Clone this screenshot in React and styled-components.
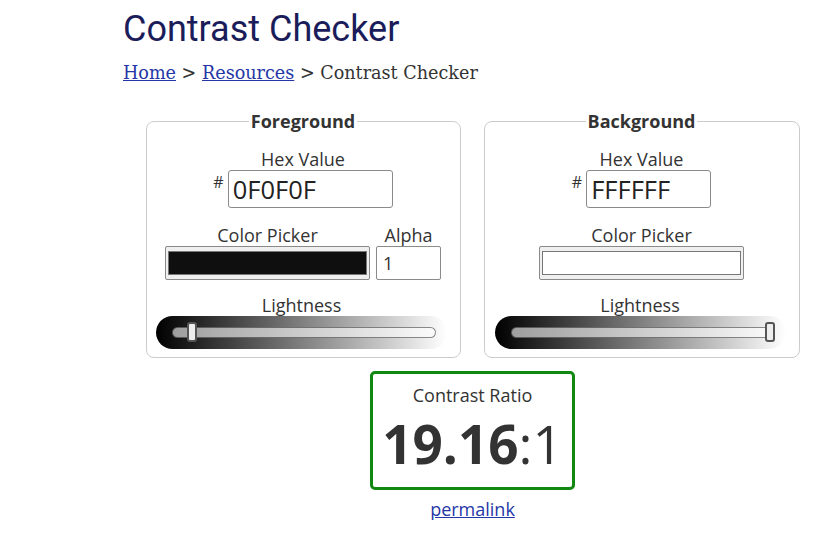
import React from 'react'
import styled, { createGlobalStyle } from 'styled-components'

const GlobalStyle = createGlobalStyle`
    body {
        margin: 0;
        background: #fff;
        font-family: "Open Sans", "Liberation Sans", sans-serif;
        color: #333;
    }
`

const Page = styled.main`
    width: 699px;
    padding: 8px 0 0 123px;
`

const Title = styled.h1`
    font-family: Roboto, "Liberation Sans", sans-serif;
    font-weight: 400;
    font-size: 36px;
    line-height: 42px;
    color: #1b1c5a;
    margin: 0;
`

const Crumbs = styled.nav`
    font-family: "DejaVu Serif", "Liberation Serif", serif;
    font-size: 17.6px;
    line-height: 24px;
    color: #333;
    margin-top: 11px;

    a {
        color: #2536a6;
    }
`

const Panels = styled.div`
    display: grid;
    grid-template-columns: 315px 316px;
    justify-content: center;
    column-gap: 23px;
    margin-top: 24px;
`

const Panel = styled.fieldset`
    margin: 0;
    padding: 0 0 8px;
    border: 1px solid #ccc;
    border-radius: 8px;
    display: flex;
    flex-direction: column;
    align-items: center;
`

const Legend = styled.legend`
    margin: 0 auto;
    padding: 0 2px;
    font-weight: 700;
    font-size: 18px;
    line-height: 25px;
`

const Label = styled.div`
    font-size: 18px;
    line-height: 22px;
    text-align: center;
    margin-top: ${p => p.$top || 0}px;
`

const HexRow = styled.div`
    display: flex;
    align-items: flex-start;
`

const Hash = styled.span`
    font-size: 16px;
    line-height: 18px;
    margin: 3px 4px 0 0;
`

const HexInput = styled.div`
    box-sizing: border-box;
    width: ${p => p.$width}px;
    height: 38px;
    border: 1px solid #8a8a8a;
    border-radius: 3px;
    padding: 0 4px;
    font-size: 25.5px;
    line-height: 36px;
    color: #222;
`

const PickerRow = styled.div`
    display: flex;
    gap: 6px;
    margin-top: 16px;
`

const Column = styled.div`
    display: flex;
    flex-direction: column;
    align-items: center;
`

const Picker = styled.div`
    box-sizing: border-box;
    width: 205px;
    height: 34px;
    padding: 4px 2px;
    background: #efefef;
    border: 1px solid #8a8a8a;
    border-radius: 2px;
`

const Swatch = styled.div`
    height: 100%;
    box-sizing: border-box;
    border: 1px solid #777;
    background: ${p => p.$color};
`

const AlphaInput = styled.div`
    box-sizing: border-box;
    width: 65px;
    height: 34px;
    border: 1px solid #8a8a8a;
    border-radius: 2px;
    padding: 0 6px;
    font-size: 18px;
    line-height: 32px;
`

const SliderBlock = styled.div`
    display: flex;
    flex-direction: column;
    align-items: center;
    margin-top: 14px;
    margin-right: 3px;
`

const SliderPill = styled.div`
    box-sizing: border-box;
    width: 291px;
    height: 33px;
    border-radius: 17px;
    background: linear-gradient(to right, #000 0%, #fff 100%);
    padding: 11px 11px 0 16px;
`

const Track = styled.div`
    position: relative;
    box-sizing: border-box;
    height: 11px;
    border: 1px solid rgba(0, 0, 0, 0.45);
    border-radius: 6px;
    background: rgba(255, 255, 255, 0.6);
`

const Thumb = styled.div`
    position: absolute;
    top: -6px;
    box-sizing: border-box;
    width: 10px;
    height: 20px;
    background: #eee;
    border: 2px solid #555;
    border-radius: 3px;
`

const Result = styled.div`
    display: flex;
    flex-direction: column;
    align-items: center;
    margin-top: 13px;
`

const RatioBox = styled.div`
    box-sizing: border-box;
    width: 205px;
    height: 119px;
    border: 3px solid #118811;
    border-radius: 5px;
    display: flex;
    flex-direction: column;
    align-items: center;
    padding-top: 10px;
`

const Ratio = styled.div`
    font-size: 53px;
    line-height: 60px;
    margin-top: 8px;

    b {
        font-weight: 700;
    }
`

const Permalink = styled.a`
    font-size: 18px;
    line-height: 24px;
    margin-top: 7px;
    color: #2536a6;
`

const TRACK_WIDTH = 264
const THUMB_WIDTH = 10

const Lightness = ({ value }) => (
    <SliderBlock>
        <Label>Lightness</Label>
        <SliderPill>
            <Track>
                <Thumb style={{ left: Math.round(value * (TRACK_WIDTH - THUMB_WIDTH)) - 1 }} />
            </Track>
        </SliderPill>
    </SliderBlock>
)

const ColorPanel = ({ title, hex, hexWidth, lightness, alpha }) => (
    <Panel>
        <Legend>{title}</Legend>
        <Label $top={14}>Hex Value</Label>
        <HexRow>
            <Hash>#</Hash>
            <HexInput $width={hexWidth}>{hex}</HexInput>
        </HexRow>
        <PickerRow>
            <Column>
                <Label>Color Picker</Label>
                <Picker><Swatch $color={'#' + hex} /></Picker>
            </Column>
            {alpha && (
                <Column>
                    <Label>Alpha</Label>
                    <AlphaInput>{alpha}</AlphaInput>
                </Column>
            )}
        </PickerRow>
        <Lightness value={lightness} />
    </Panel>
)

const App = () => (
    <Page>
        <GlobalStyle />
        <Title>Contrast Checker</Title>
        <Crumbs>
            <a href="#">Home</a> &gt; <a href="#">Resources</a> &gt; Contrast Checker
        </Crumbs>
        <Panels>
            <ColorPanel title="Foreground" hex="0F0F0F" hexWidth={165} lightness={0.059} alpha="1" />
            <ColorPanel title="Background" hex="FFFFFF" hexWidth={125} lightness={1} />
        </Panels>
        <Result>
            <RatioBox>
                <Label>Contrast Ratio</Label>
                <Ratio><b>19.16</b>:1</Ratio>
            </RatioBox>
            <Permalink href="#">permalink</Permalink>
        </Result>
    </Page>
)

export default App
